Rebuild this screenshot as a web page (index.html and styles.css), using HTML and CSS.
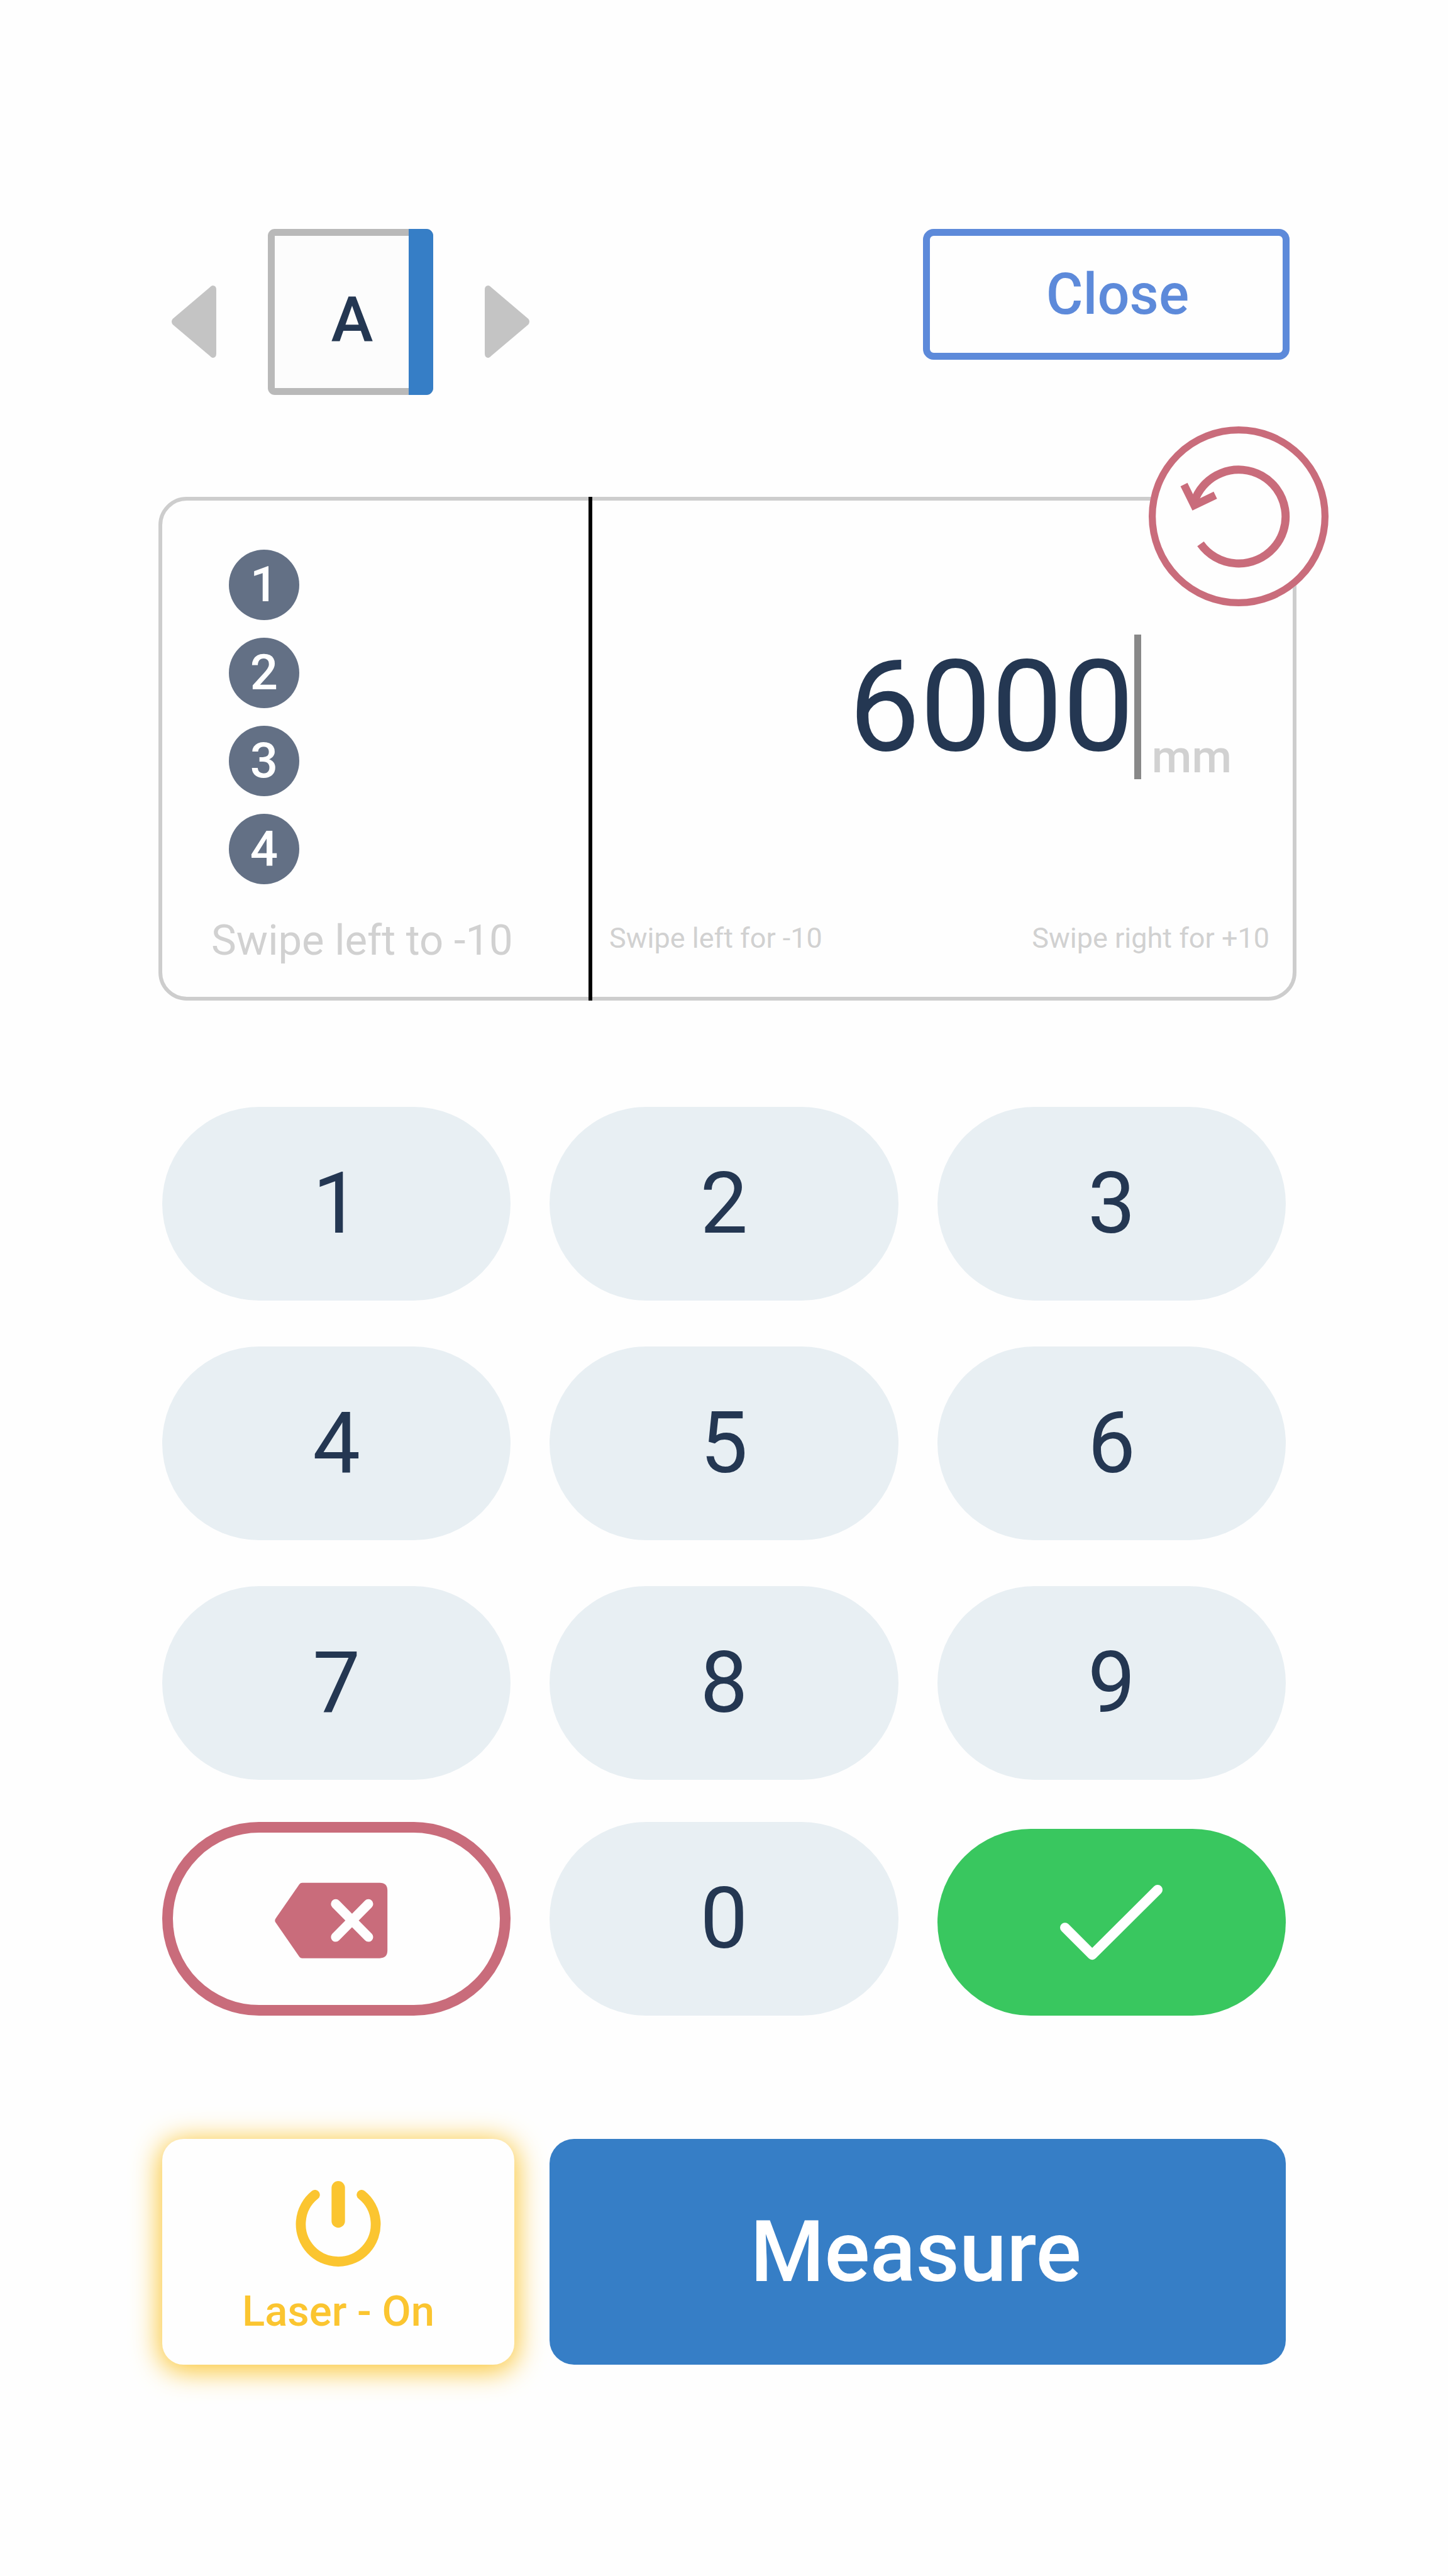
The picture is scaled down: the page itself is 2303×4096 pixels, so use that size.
FILE: index.html
```html
<!DOCTYPE html>
<html lang="en">
<head>
    <meta charset="UTF-8">
    <meta name="viewport" content="width=device-width, initial-scale=1.0">
    <title>Laser Measure</title>
    <link rel="stylesheet" href="styles.css">
</head>
<body>

<div class="container">
    <header class="header">
        <div class="side-picker">
            <button type="button" class="arrow" aria-label="Previous side">
                <svg viewBox="0 0 126 204"><path d="M126 12V192Q126 204 116 204Q112 204 108 199L3 110Q-3 102 3 94L108 5Q112 0 116 0Q126 0 126 12Z"/></svg>
            </button>
            <div class="side">A</div>
            <button type="button" class="arrow" aria-label="Next side">
                <svg viewBox="0 0 126 204"><path d="M0 12V192Q0 204 10 204Q14 204 18 199L123 110Q129 102 123 94L18 5Q14 0 10 0Q0 0 0 12Z"/></svg>
            </button>
        </div>
        <button type="button" class="close">Close</button>
    </header>

    <section class="card">
        <div class="history">
            <ol class="steps">
                <li>1</li>
                <li>2</li>
                <li>3</li>
                <li>4</li>
            </ol>
            <p class="history-hint">Swipe left to -10</p>
        </div>
        <div class="reading">
            <div class="value-row">
                <input type="text" id="value" class="value" value="6000" inputmode="numeric">
                <label for="value" class="unit">mm</label>
            </div>
            <div class="hints">
                <span>Swipe left for -10</span>
                <span>Swipe right for +10</span>
            </div>
        </div>
        <button type="button" class="reset" aria-label="Reset">
            <svg viewBox="-255 -255 510 510">
                <circle r="245" stroke-width="20"/>
                <path d="M-108 78A133 133 0 1 0 -127 -38" stroke-width="23"/>
                <path d="M-155 -90L-126 -31L-66 -60" stroke-width="22"/>
            </svg>
        </button>
    </section>

    <div class="keypad">
        <button type="button" class="key">1</button>
        <button type="button" class="key">2</button>
        <button type="button" class="key">3</button>
        <button type="button" class="key">4</button>
        <button type="button" class="key">5</button>
        <button type="button" class="key">6</button>
        <button type="button" class="key">7</button>
        <button type="button" class="key">8</button>
        <button type="button" class="key">9</button>
    </div>
    <div class="keypad keypad-bottom">
        <button type="button" class="key key-delete" aria-label="Delete">
            <svg viewBox="0 0 350 214">
                <path class="tag" d="M78 5H298Q320 5 320 27V197Q320 219 298 219H78Q73 219 70 215L2 117Q-1 112 2 107L70 9Q73 5 78 5Z"/>
                <path class="cross" d="M173 65L266 159M266 65L173 159"/>
            </svg>
        </button>
        <button type="button" class="key">0</button>
        <button type="button" class="key key-ok" aria-label="Confirm">
            <svg viewBox="0 0 290 212"><path d="M14 121L91 198L276 14"/></svg>
        </button>
    </div>

    <div class="actions">
        <button type="button" class="laser">
            <svg viewBox="0 0 242 242">
                <path d="M55 39A106 106 0 1 0 187 39" stroke-width="28"/>
                <path d="M121 19V113" stroke-width="38"/>
            </svg>
            Laser - On
        </button>
        <button type="button" class="measure">Measure</button>
    </div>
</div>

</body>
</html>
```
FILE: styles.css
```css
* {
    box-sizing: border-box;
}
body {
    margin: 0;
    background-color: #fefefe;
    color: #243752;
    font-family: Roboto, sans-serif;
}
button {
    padding: 0;
    border: none;
    background: none;
    font-family: inherit;
    cursor: pointer;
}
svg {
    display: block;
    overflow: visible;
}
.container {
    padding: 364px 241px 336px 252px;
}

/* Header */
.header {
    display: flex;
    justify-content: space-between;
    align-items: flex-start;
    padding: 0 11px 0 21px;
}
.side-picker {
    display: flex;
    align-items: flex-start;
    gap: 82px;
}
.arrow {
    width: 71px;
    margin-top: 90px;
}
.arrow svg {
    width: 100%;
    fill: #c4c4c4;
}
.side {
    position: relative;
    width: 263px;
    height: 264px;
    padding: 24px 0 0 5px;
    border: 11px solid #b9b9b9;
    border-radius: 11px;
    background-color: #fcfcfc;
    font-size: 101px;
    font-weight: 500;
    line-height: 219px;
    text-align: center;
}
/* blue strip marks the edge being measured */
.side::after {
    content: "";
    position: absolute;
    top: -11px;
    right: -11px;
    bottom: -11px;
    width: 39px;
    border-radius: 0 11px 11px 0;
    background-color: #367ec6;
}
.close {
    width: 583px;
    height: 208px;
    padding-left: 36px;
    border: 11px solid #5d8ada;
    border-radius: 17px;
    color: #5d8ada;
    font-size: 90px;
    font-weight: 500;
}

/* Measurement card */
.card {
    position: relative;
    display: grid;
    grid-template-columns: 678px 1fr;
    margin-top: 162px;
    border: 6px solid #cdcdcd;
    border-radius: 45px;
}
.history {
    padding: 78px 0 50px;
}
.steps {
    display: flex;
    flex-direction: column;
    gap: 28px;
    margin: 0;
    padding: 0 0 0 106px;
    list-style: none;
}
.steps li {
    width: 112px;
    border-radius: 50%;
    background-color: #637085;
    color: #fff;
    font-size: 78px;
    font-weight: 500;
    line-height: 112px;
    text-align: center;
}
.history-hint {
    margin: 49px 0 0 78px;
    color: #d1d1d1;
    font-size: 67px;
    line-height: 80px;
}
.reading {
    display: flex;
    flex-direction: column;
    justify-content: space-between;
    min-width: 0;
    margin: -6px 0;
    padding: 219px 37px 72px 27px;
    border-left: 6px solid #000;
}
.value-row {
    display: flex;
    align-items: flex-end;
    justify-content: flex-end;
    gap: 17px;
    padding-right: 60px;
}
.value {
    flex: 1;
    min-width: 0;
    height: 230px;
    padding: 0;
    border: none;
    border-right: 11px solid #888;
    background: none;
    color: #243752;
    font-family: inherit;
    font-size: 202px;
    text-align: right;
    outline: none;
}
.unit {
    color: #d1d1d1;
    font-size: 73px;
    font-weight: 500;
    line-height: 72px;
}
.hints {
    display: flex;
    justify-content: space-between;
    color: #d1d1d1;
    font-size: 45px;
    line-height: 54px;
}
.reset {
    position: absolute;
    top: -118px;
    right: -57px;
    width: 286px;
    height: 286px;
    border-radius: 50%;
    background-color: #fefefe;
}
.reset svg {
    width: 100%;
    fill: none;
    stroke: #c96c7b;
}

/* Keypad */
.keypad {
    display: grid;
    grid-template-columns: repeat(3, 1fr);
    gap: 73px 62px;
    margin: 169px 17px 0 6px;
}
.keypad-bottom {
    margin-top: 67px;
}
.key {
    display: flex;
    align-items: center;
    justify-content: center;
    height: 308px;
    border-radius: 154px;
    background-color: #e8eff3;
    color: #243752;
    font-size: 135px;
}
.key-delete {
    border: 17px solid #c96c7b;
    background: none;
}
.key-delete svg {
    width: 196px;
}
.key-delete .tag {
    fill: #c96c7b;
}
.key-delete .cross {
    stroke: #fefefe;
    stroke-width: 27;
    stroke-linecap: round;
}
.key-ok {
    align-self: end;
    height: 297px;
    background-color: #39c75f;
}
.key-ok svg {
    width: 163px;
    fill: none;
    stroke: #fff;
    stroke-width: 28;
    stroke-linecap: round;
    stroke-linejoin: round;
}

/* Bottom actions */
.actions {
    display: grid;
    grid-template-columns: 560px 1fr;
    gap: 56px;
    margin: 196px 17px 0 6px;
}
.laser {
    display: flex;
    flex-direction: column;
    align-items: center;
    gap: 31px;
    height: 359px;
    padding-top: 67px;
    border-radius: 34px;
    background-color: #fefefe;
    box-shadow: 0 6px 44px 4px #fbc530;
    color: #fbc530;
    font-size: 67px;
    font-weight: 500;
    line-height: 80px;
}
.laser svg {
    width: 136px;
    fill: none;
    stroke: #fbc530;
    stroke-linecap: round;
}
.measure {
    padding-right: 6px;
    border-radius: 39px;
    background-color: #367ec6;
    color: #fff;
    font-size: 135px;
    font-weight: 500;
}
```
